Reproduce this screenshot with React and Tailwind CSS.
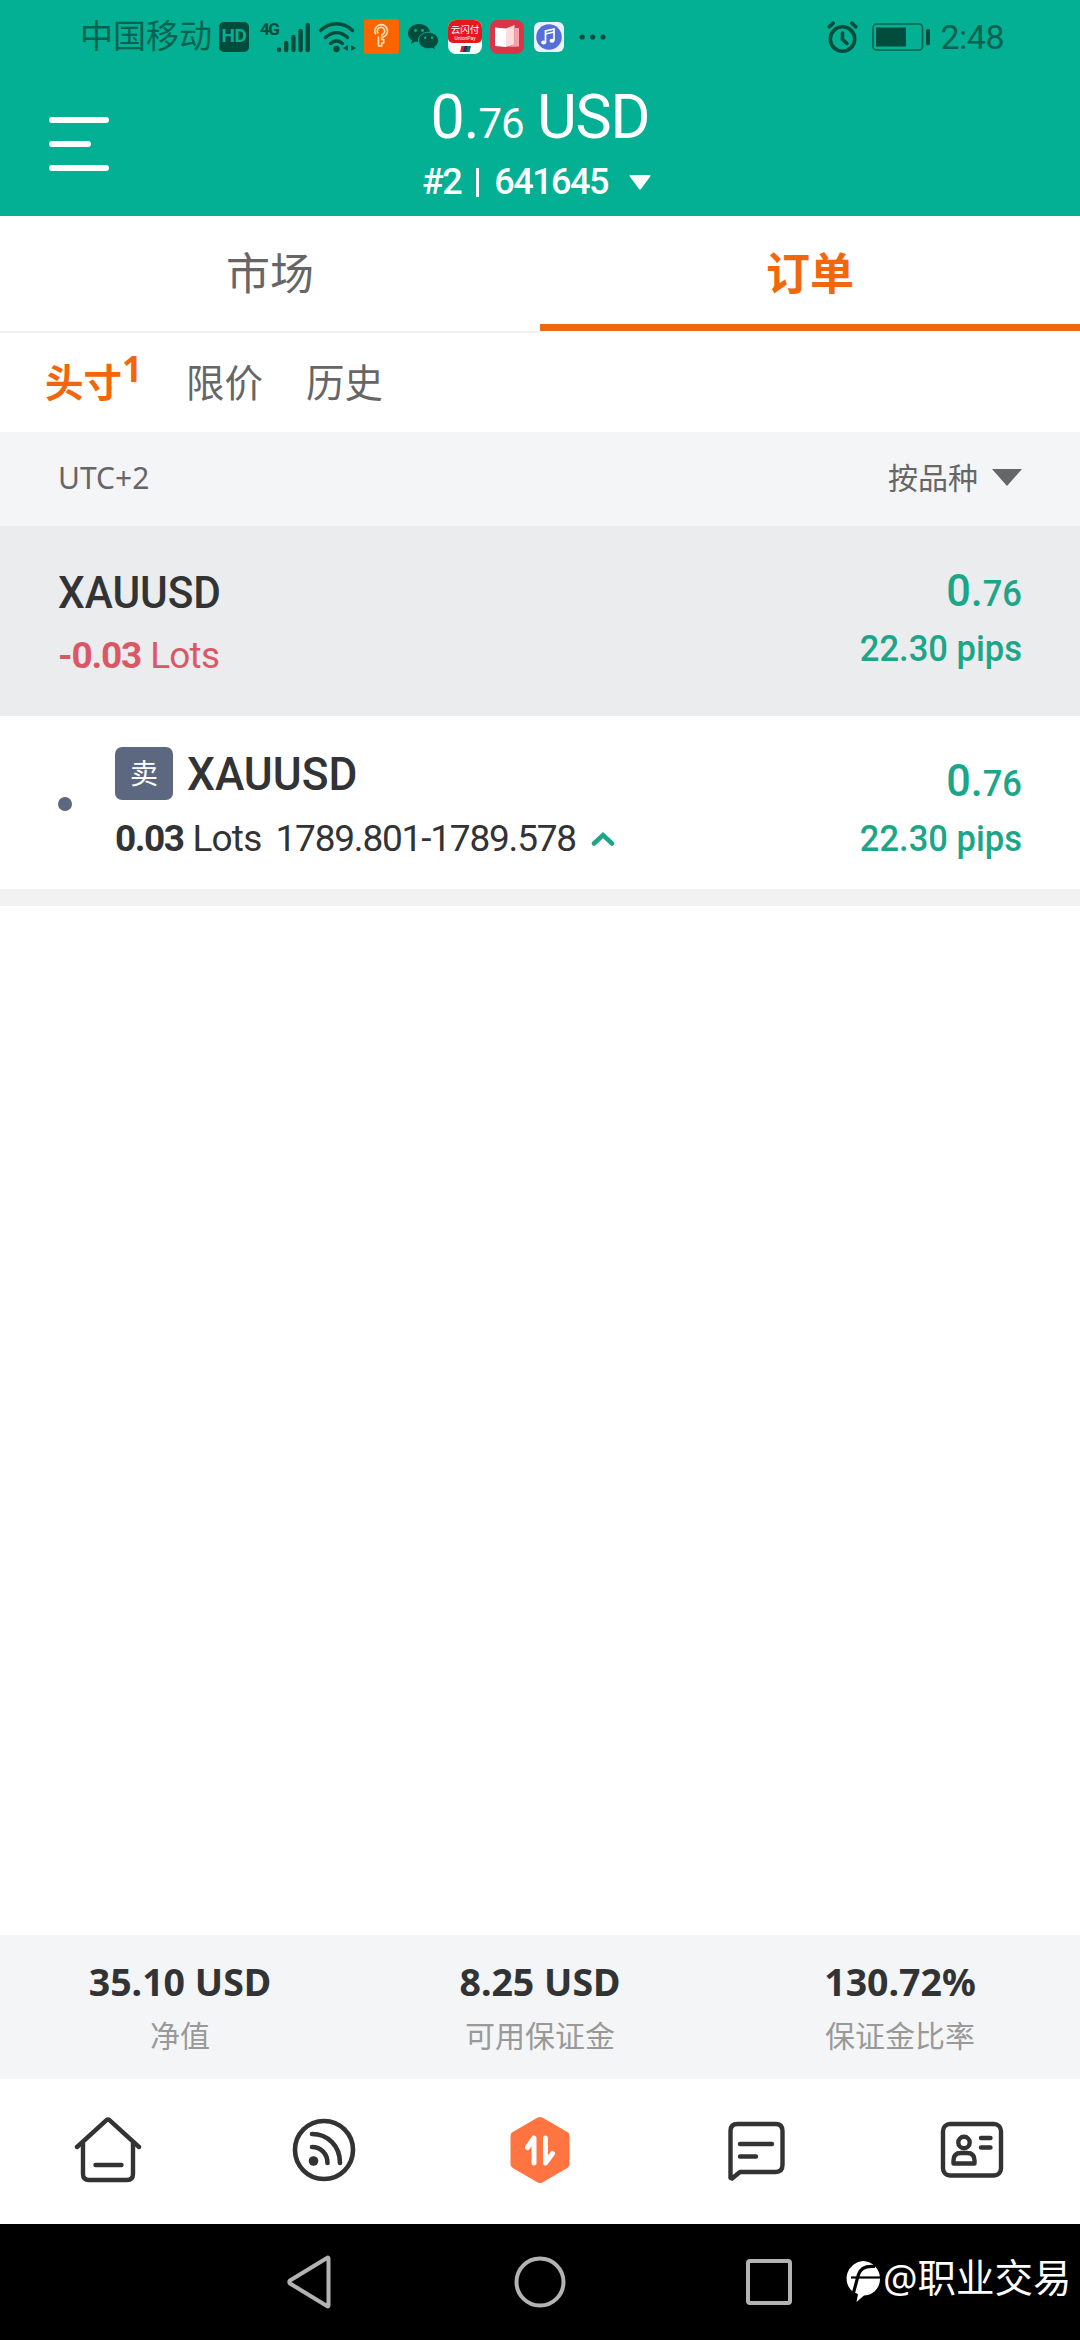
import React from 'react';

const StatusBar = () => (
  <div className="h-[73px] pl-[80px] flex items-center text-[#04624f]">
    <span className="w-[139px] text-[33px] leading-none whitespace-nowrap">中国移动</span>
    <span className="w-[30px] h-[30px] rounded-[5px] bg-[#024c3d] text-[#03b093] text-[19px] font-bold flex items-center justify-center tracking-[-0.5px]">
      HD
    </span>
    <span className="ml-[11px] w-[18px] h-[34px] text-[17px] leading-[19px] font-bold tracking-[-1.5px] text-[#024c3d]">4G</span>
    {/* Signal */}
    <svg className="-ml-[2px] shrink-0" width="35" height="32" viewBox="0 0 35 32" stroke="#024c3d" strokeWidth="4.4" strokeLinecap="round">
      <path d="M3 28.5v.5M10.2 22v7M17.4 16v13M24.6 10v19M31.8 4v25" />
    </svg>
    {/* Wifi */}
    <svg className="ml-[7px] shrink-0" width="38" height="32" viewBox="0 0 38 32" fill="none" stroke="#024c3d" strokeWidth="3.4" strokeLinecap="round">
      <path d="M2.5 9.5C12 .5 25 .5 34.5 9.5M7.5 16.5c7-6.5 15-6.5 22 0M12.5 22.5c4-3.5 8-3.5 12 0" />
      <circle cx="18.5" cy="28" r="3.2" fill="#024c3d" stroke="none" />
      <path d="M30 24v6l-5-3zM33 24v6l5-3z" fill="#024c3d" stroke="none" />
    </svg>
    {/* Orange key app */}
    <svg className="ml-[8px] shrink-0" width="35" height="35" viewBox="0 0 35 35" fill="none" stroke="#ffe3bd" strokeWidth="1.6" strokeLinejoin="round">
      <rect width="35" height="35" rx="2" fill="#fb6500" stroke="none" />
      <path d="M14.5 17.5V27h3.2v-3h2v-3.5h-2v-2.3" />
      <path d="M11.8 15.5a6.4 6.4 0 1 1 5.900 2.900" />
      <path d="M14.200 14.500a3.700 3.700 0 1 1 3.500 1.200v1.500" />
    </svg>
    {/* WeChat */}
    <svg className="ml-[9px] shrink-0" width="31" height="28" viewBox="0 0 31 28" fill="#024c3d">
      <path d="M11 1C5 1 0 5 0 10.200c0 3 1.600 5.400 4 7L3 21l4.500-2.400c1.200.3 2.300.5 3.500.5C17 19 22 15.200 22 10S17 1 11 1z" />
      <path d="M20.500 9.200c-5.600 0-10 3.700-10 8.200 0 4.600 4.400 8.300 10 8.300 1.300 0 2.400-.2 3.500-.5l3.700 2-1-3.200c2.400-1.600 3.800-4 3.800-6.600 0-4.500-4.400-8.200-10-8.200z" stroke="#03b093" strokeWidth="1" />
      <g fill="#03b093">
        <circle cx="7.500" cy="7.500" r="1.400" />
        <circle cx="14.500" cy="7.500" r="1.400" />
        <circle cx="17.200" cy="14.800" r="1.200" />
        <circle cx="24" cy="14.800" r="1.200" />
      </g>
    </svg>
    {/* Payment app */}
    <span className="ml-[9px] w-[34px] h-[34px] rounded-[8px] overflow-hidden bg-white flex flex-col items-center shrink-0">
      <span className="w-full h-[23px] shrink-0 rounded-b-[5px] bg-[#e5191d] text-white flex flex-col items-center pt-[5px]">
        <span className="text-[9.5px] leading-[10px] whitespace-nowrap">云闪付</span>
        <span className="text-[5px] leading-[6px] whitespace-nowrap">UnionPay</span>
      </span>
      <svg className="mt-[3px] shrink-0" width="11" height="6" viewBox="0 0 11 6">
        <path d="M1.500 0H5L3.500 6H0z" fill="#d8232c" />
        <path d="M4.500 0H8L6.500 6H3z" fill="#20345f" />
        <path d="M7.500 0H11L9.500 6H6z" fill="#0b7474" />
      </svg>
    </span>
    {/* Reader app */}
    <svg className="ml-[8px] shrink-0" width="34" height="34" viewBox="0 0 34 34">
      <rect width="34" height="34" rx="8" fill="#d93447" />
      <path d="M5 7.500l11 1V27L5 26z" fill="#fff" />
      <path d="M16 8.500l8.500-3.500v19.500L16 27z" fill="#fcdcdf" />
      <path d="M24.500 8H29v18.500l-11 .5 6.500-2.500z" fill="#f3a3ab" />
    </svg>
    {/* Music app */}
    <svg className="ml-[10px] shrink-0" width="30" height="30" viewBox="0 0 30 30" fill="none">
      <rect width="30" height="30" rx="6" fill="#eef1ff" />
      <circle cx="15" cy="15" r="12.800" fill="#5470d8" />
      <path d="M11.500 20.500V9l8.500-2v11.500M11.500 12l8.500-2" stroke="#fff" strokeWidth="1.700" />
      <ellipse cx="9.600" cy="20.500" rx="2.500" ry="2" fill="#fff" />
      <ellipse cx="18" cy="18.800" rx="2.500" ry="2" fill="#fff" />
    </svg>
    <svg className="ml-[15px] shrink-0" width="28" height="8" viewBox="0 0 28 8" fill="#024c3d">
      <circle cx="3.200" cy="4" r="2.600" />
      <circle cx="13.700" cy="4" r="2.600" />
      <circle cx="24" cy="4" r="2.600" />
    </svg>

    <div className="ml-auto mr-[76px] flex items-center">
      <svg width="31" height="32" viewBox="0 0 31 32" fill="none" stroke="#024c3d" strokeWidth="3.600" strokeLinecap="round">
        <circle cx="15.500" cy="18" r="12.200" />
        <path d="M15.500 12v6.500l4.500 4" />
        <path d="M2.200 5.800l4-3.600M28.800 5.800l-4-3.600" />
      </svg>
      <svg className="ml-[14px]" width="59" height="28" viewBox="0 0 59 28">
        <rect x="1" y="1" width="49.500" height="26" rx="3.500" fill="none" stroke="#04624f" strokeWidth="1.600" />
        <rect x="4" y="4.500" width="30" height="19" fill="#024c3d" />
        <rect x="54" y="6" width="4" height="16" rx="1.500" fill="#024c3d" />
      </svg>
      <span className="ml-[9px] text-[34px] leading-none tracking-[-0.5px]">2:48</span>
    </div>
  </div>
);

const Header = () => (
  <header className="h-[216px] bg-[#03b093] overflow-hidden">
    <StatusBar />
    <div className="h-[143px] grid grid-cols-3 text-white">
      <div className="pl-[49px] pt-[44px] flex flex-col gap-[18px]">
        <span className="w-[60px] h-[6px] rounded-full bg-white" />
        <span className="w-[42px] h-[6px] rounded-full bg-white" />
        <span className="w-[60px] h-[6px] rounded-full bg-white" />
      </div>
      <div className="flex flex-col items-center whitespace-nowrap">
        <div className="mt-[8px] h-[73px] leading-[73px] text-[61px] tracking-[-1.2px]">
          0.<span className="text-[42px]">76</span> USD
        </div>
        <div className="h-[56px] mr-[7px] flex items-center text-[36px] font-medium tracking-[-1.5px]">
          <span>#2</span>
          <span className="mx-[15px] w-[3px] h-[29px] bg-white" />
          <span>641645</span>
          <svg className="ml-[21px]" width="22" height="15" viewBox="0 0 22 15" fill="#fff">
            <path d="M1.500 0h19c1 0 1.300.8.700 1.600L12 14c-.6.800-1.400.8-2 0L.800 1.600C.200.800.500 0 1.500 0z" />
          </svg>
        </div>
      </div>
    </div>
  </header>
);

const Profit = () => (
  <div className="flex flex-col items-end text-[#1ba68a] font-medium whitespace-nowrap">
    <div className="text-[45px] leading-[56px] origin-right scale-x-[0.96]">
      0.<span className="text-[36px]">76</span>
    </div>
    <div className="-mt-px text-[36px] leading-[56px] origin-right scale-x-[0.96]">22.30 pips</div>
  </div>
);

const stats = [
  { value: '35.10 USD', label: '净值' },
  { value: '8.25 USD', label: '可用保证金' },
  { value: '130.72%', label: '保证金比率' },
];

const BottomNav = () => (
  <nav className="h-[145px] bg-white grid grid-cols-5 place-items-center pb-[4px]">
    {/* Home */}
    <svg width="68" height="68" viewBox="0 0 68 68" fill="none" stroke="#333" strokeWidth="4.400" strokeLinecap="round" strokeLinejoin="round">
      <path d="M3 31L32.500 4.200c1-.9 2-.9 3 0L65 31" />
      <path d="M9 27v31q0 6 6 6h38q6 0 6-6V27M21.500 49h26" />
    </svg>
    {/* Signals */}
    <svg width="68" height="68" viewBox="0 0 68 68" fill="none" stroke="#333" strokeWidth="4.600" strokeLinecap="round">
      <circle cx="34" cy="34" r="29" />
      <path d="M22 18c16 0 28 12 28 29M22 31c9 0 15.500 7 15.500 16" />
      <circle cx="23.500" cy="45" r="4.800" fill="#333" stroke="none" />
    </svg>
    {/* Trade */}
    <svg width="68" height="68" viewBox="0 0 68 68" fill="none" stroke="#fff" strokeWidth="5" strokeLinecap="round" strokeLinejoin="round">
      <path d="M34 5.500L59 20V48L34 62.500L9 48V20z" fill="#ff7441" stroke="#ff7441" strokeWidth="9" />
      <path d="M21.500 31.500L28 22v25M39.500 22v25l7-9.500" />
    </svg>
    {/* Messages */}
    <svg width="68" height="68" viewBox="0 0 68 68" fill="none" stroke="#333" strokeWidth="4.400" strokeLinecap="round" strokeLinejoin="round">
      <path d="M8.500 62V15q0-7 7-7h38q7 0 7 7v34q0 7-7 7H18l-8 6.500z" />
      <path d="M18 28h32M18 40.500h16" />
    </svg>
    {/* Account */}
    <svg width="68" height="68" viewBox="0 0 68 68" fill="none" stroke="#333" strokeWidth="4.400" strokeLinecap="round" strokeLinejoin="round">
      <rect x="5" y="8" width="58" height="51.500" rx="7" />
      <circle cx="26" cy="26.500" r="5.700" />
      <path d="M15.500 47.500v-3q0-7.500 7.500-7.500h6q7.500 0 7.500 7.500v3zM43 22h9.500M43 31.500h9.500" />
    </svg>
  </nav>
);

const SystemNav = () => (
  <div className="h-[116px] pl-[287px] bg-black flex items-center text-white whitespace-nowrap">
    <svg className="shrink-0" width="45" height="54" viewBox="0 0 45 54" fill="none" stroke="#b3b3b3" strokeWidth="4" strokeLinejoin="round">
      <path d="M41.500 3.500v47q0 1.500-1.500.5L3 28.500q-1.500-1.500 0-3L40 3q1.500-1 1.500.5z" />
    </svg>
    <svg className="ml-[182px] shrink-0" width="52" height="54" viewBox="0 0 52 54" fill="none" stroke="#b3b3b3" strokeWidth="4">
      <circle cx="26" cy="27" r="23.500" />
    </svg>
    <span className="ml-[180px] w-[46px] h-[46px] rounded-[4px] border-4 border-[#b3b3b3] shrink-0" />
    <svg className="ml-[53px] shrink-0" width="36" height="44" viewBox="0 0 36 44">
      <path d="M18 1a17.500 17.500 0 0 1 17 18C35 28 28 35.500 19 35.500L11.500 42 13 34 8 32A17.500 17.500 0 0 1 18 1z" fill="#fff" />
      <path d="M7.500 36C10 28 11.500 21 13.500 14.500 15.500 8 21 5.500 30 6.500" fill="none" stroke="#000" strokeWidth="3.200" />
      <path d="M6 17.500h30" fill="none" stroke="#000" strokeWidth="2.200" />
    </svg>
    <span className="ml-[2px] mb-[9px] text-[38.500px] leading-none font-['Noto_Sans','Noto_Sans_CJK_SC',sans-serif]">
      @职业交易
    </span>
  </div>
);

const App = () => (
  <div className="w-[1080px] h-[2340px] flex flex-col bg-white text-[#323334] font-['Roboto','Noto_Sans_CJK_SC',sans-serif] overflow-hidden">
    <Header />

    {/* Main tabs */}
    <div className="h-[117px] grid grid-cols-2 text-[44px] text-center">
      <div className="leading-[119px] h-[117px] border-b-2 border-[#f2f2f2] text-[#666]">市场</div>
      <div className="leading-[119px] h-[115px] border-b-[7px] border-[#f2670c] font-bold text-[#f2670c]">订单</div>
    </div>

    {/* Order filters */}
    <div className="h-[99px] pt-[4px] pl-[45px] flex items-center text-[38.500px] leading-none text-[#666]">
      <div className="w-[141px] flex font-bold text-[#f2670c]">
        <span>头寸</span>
        <sup className="top-0 -mt-[14px] text-[35px] leading-none font-['Noto_Sans',sans-serif]">1</sup>
      </div>
      <span className="w-[120px]">限价</span>
      <span>历史</span>
    </div>

    <div className="h-[94px] px-[58px] pb-[4px] flex items-center justify-between bg-[#f4f5f7] text-[30px] text-[#666] font-['Noto_Sans','Noto_Sans_CJK_SC',sans-serif]">
      <span>UTC+2</span>
      <div className="flex items-center">
        <span>按品种</span>
        <svg className="ml-[14px]" width="30" height="17" viewBox="0 0 30 17" fill="#666">
          <path d="M0 0h30L15 17z" />
        </svg>
      </div>
    </div>

    {/* Symbol summary */}
    <div className="h-[190px] px-[58px] flex justify-between bg-[#ebeced]">
      <div className="pt-[39px]">
        <div className="text-[45px] leading-[56px] font-medium origin-left scale-x-[0.94]">XAUUSD</div>
        <div className="mt-[7px] text-[37px] leading-[56px] text-[#dc5765]">
          <b className="tracking-[-1.2px]">-0.03</b> <span className="tracking-[-0.8px]">Lots</span>
        </div>
      </div>
      <div className="pt-[37px]">
        <Profit />
      </div>
    </div>

    {/* Position */}
    <div className="h-[173px] px-[58px] flex justify-between">
      <div className="flex items-center">
        <span className="w-[14px] h-[14px] mt-[3px] rounded-full bg-[#5b687f]" />
        <div className="ml-[43px] h-full pt-[31px]">
          <div className="h-[53px] flex items-center gap-[14px]">
            <span className="w-[58px] h-[53px] pt-[2px] rounded-[7px] bg-[#5b687f] text-white text-[28px] flex items-center justify-center">卖</span>
            <span className="text-[47px] leading-none font-medium origin-left scale-x-[0.94]">XAUUSD</span>
          </div>
          <div className="mt-[11px] flex items-center text-[37px] leading-[56px] whitespace-nowrap">
            <b className="tracking-[-1.500px]">0.03</b>
            <span className="ml-[9px] tracking-[-0.800px]">Lots</span>
            <span className="ml-[14px] tracking-[-1.200px]">1789.801-1789.578</span>
            <svg className="ml-[15px]" width="24" height="16" viewBox="0 0 24 16" fill="none" stroke="#1ba68a" strokeWidth="4.500" strokeLinecap="round">
              <path d="M3 12.500l9-8.500 9 8.500" />
            </svg>
          </div>
        </div>
      </div>
      <div className="pt-[37px]">
        <Profit />
      </div>
    </div>
    <div className="h-[17px] bg-[#f2f2f2]" />

    <div className="flex-1" />

    {/* Account summary */}
    <div className="h-[144px] grid grid-cols-3 text-center bg-[#f4f5f7] font-['Noto_Sans','Noto_Sans_CJK_SC',sans-serif]">
      {stats.map((item) => (
        <div key={item.label} className="pt-[21px]">
          <div className="text-[37.500px] leading-[52px] font-bold">{item.value}</div>
          <div className="mt-[6px] text-[30px] leading-[44px] text-[#999]">{item.label}</div>
        </div>
      ))}
    </div>

    <BottomNav />
    <SystemNav />
  </div>
);

export default App;
